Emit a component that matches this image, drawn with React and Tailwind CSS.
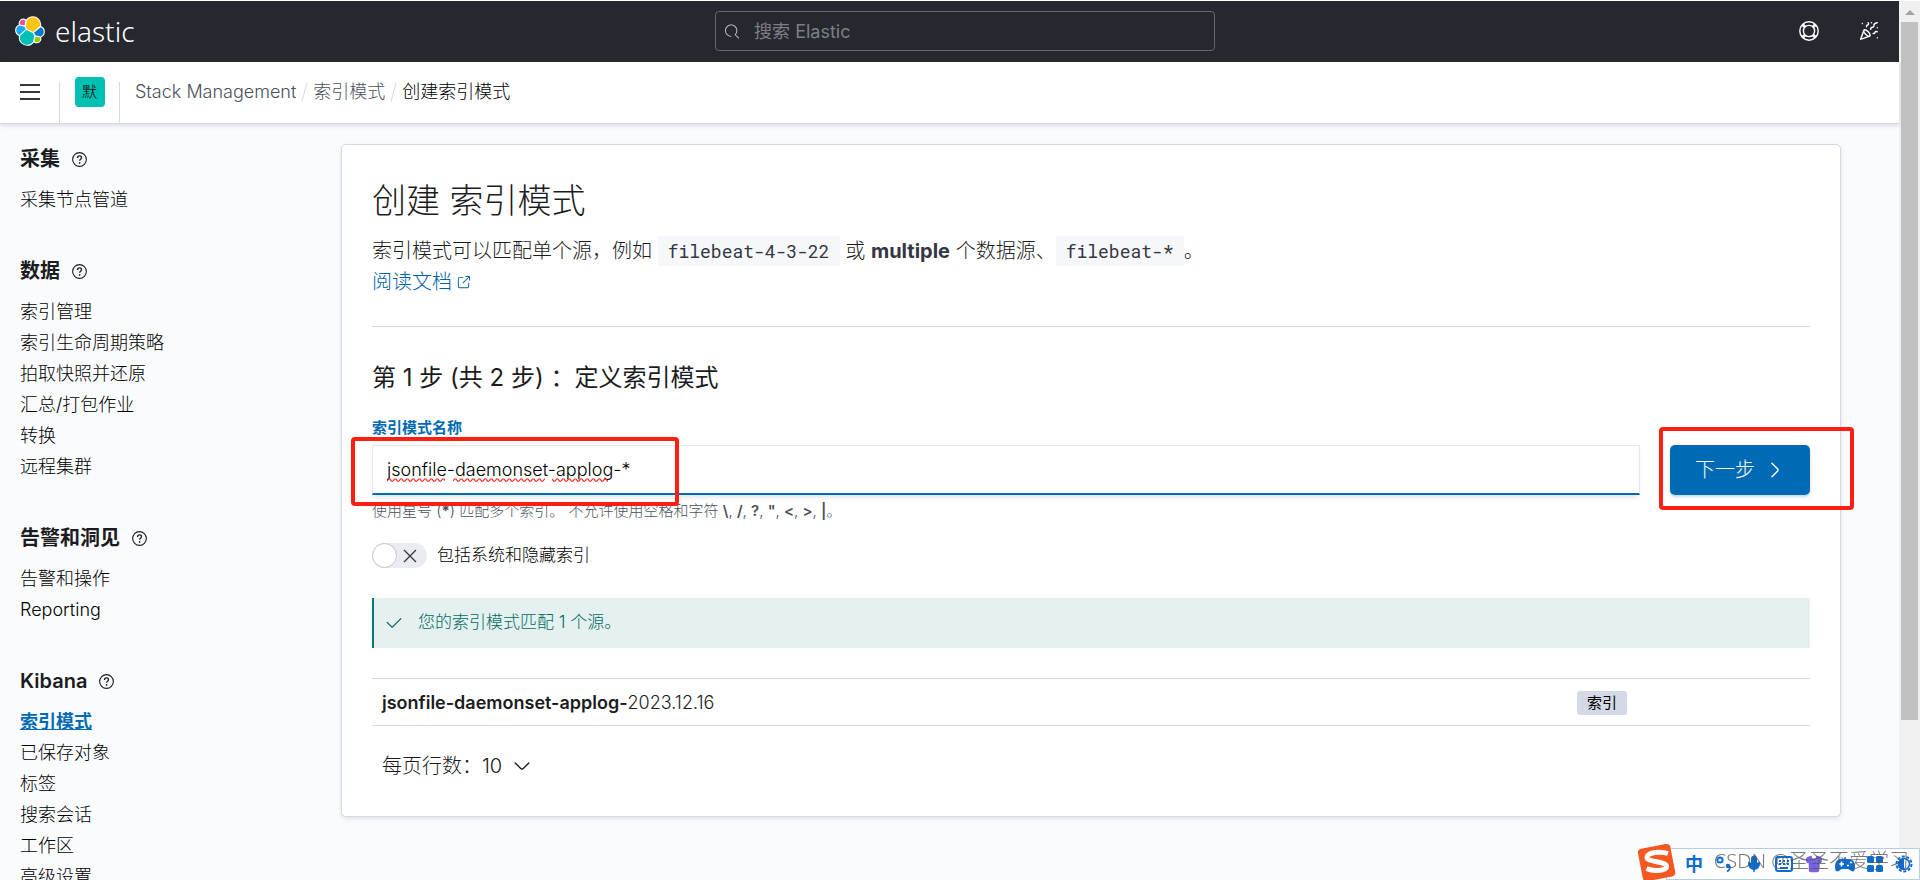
import React, { useState } from "react";
import { PartyPopper, Mic, Shirt } from "lucide-react";

const NAV_SECTIONS = [
  { title: "采集", items: ["采集节点管道"] },
  {
    title: "数据",
    items: ["索引管理", "索引生命周期策略", "拍取快照并还原", "汇总/打包作业", "转换", "远程集群"],
  },
  { title: "告警和洞见", items: ["告警和操作", "Reporting"] },
  {
    title: "Kibana",
    items: ["索引模式", "已保存对象", "标签", "搜索会话", "工作区", "高级设置"],
  },
];

const ACTIVE_ITEM = "索引模式";

const LOGO_SHAPES = [
  { fill: "#FEC514", d: "M12.58 13.787l7.002 3.211 7.066-6.213a7.849 7.849 0 00.152-1.557c0-4.287-3.464-7.762-7.738-7.762a7.72 7.72 0 00-6.382 3.379l-1.176 6.126 1.076 2.816z" },
  { fill: "#00BFB3", d: "M5.333 21.228A7.964 7.964 0 005.18 22.81c0 4.3 3.489 7.798 7.776 7.798a7.76 7.76 0 006.415-3.398l1.166-6.102-1.556-2.985-7.03-3.215-6.618 6.32z" },
  { fill: "#F04E98", d: "M5.288 9.067l4.8 1.137L11.14 4.72a3.8 3.8 0 00-2.306-.777 3.814 3.814 0 00-3.793 3.818c0 .451.08.893.246 1.306z" },
  { fill: "#1BA9F5", d: "M4.87 10.214a5.297 5.297 0 00-3.54 4.996c0 2.2 1.357 4.165 3.393 4.943l6.735-6.108-1.237-2.65-5.35-1.18z" },
  { fill: "#93C90E", d: "M20.873 27.209a3.784 3.784 0 002.288.782 3.814 3.814 0 003.793-3.818c0-.452-.08-.894-.243-1.303l-4.798-1.125-1.04 5.464z" },
  { fill: "#0077CC", d: "M21.848 20.563l5.283 1.237a5.3 5.3 0 003.541-4.996 5.288 5.288 0 00-3.403-4.936l-6.91 6.07 1.489 2.625z" },
];

const ElasticLogo = () => (
  <svg viewBox="0 0 32 32" className="size-[30px]" aria-hidden="true">
    {LOGO_SHAPES.map((s) => (
      <path key={s.fill} d={s.d} fill="#fff" stroke="#fff" strokeWidth="2.4" strokeLinejoin="round" />
    ))}
    {LOGO_SHAPES.map((s) => (
      <path key={s.fill} d={s.d} fill={s.fill} />
    ))}
  </svg>
);

const Icon = ({ d, className }) => (
  <svg viewBox="0 0 16 16" fill="currentColor" className={className} aria-hidden="true">
    <path d={d} />
  </svg>
);

const SEARCH =
  "M11.271 11.978l3.872 3.873a.502.502 0 00.708 0 .502.502 0 000-.708l-3.565-3.564c2.38-2.747 2.267-6.923-.342-9.532-2.73-2.73-7.17-2.73-9.898 0-2.728 2.729-2.728 7.17 0 9.9a6.955 6.955 0 004.949 2.05.5.5 0 000-1 5.96 5.96 0 01-4.242-1.757 6.01 6.01 0 010-8.486 6.004 6.004 0 018.484 0 6.01 6.01 0 010 8.486.5.5 0 00.034.738z";
const POPOUT =
  "M13 8.5a.5.5 0 111 0V12a2 2 0 01-2 2H4a2 2 0 01-2-2V4a2 2 0 012-2h3.5a.5.5 0 010 1H4a1 1 0 00-1 1v8a1 1 0 001 1h8a1 1 0 001-1V8.5zm-5.12.339a.5.5 0 11-.706-.707L13.305 2H10.5a.5.5 0 110-1H14a1 1 0 011 1v3.5a.5.5 0 11-1 0V2.72L7.88 8.838z";
const CHECK =
  "M6.5 12a.502.502 0 01-.354-.146l-4-4a.502.502 0 01.708-.708L6.5 10.793l6.646-6.647a.502.502 0 01.708.708l-7 7A.502.502 0 016.5 12";
const ARROW_RIGHT =
  "M5.157 13.069l4.611-4.685a.546.546 0 000-.768L5.158 2.93a.552.552 0 010-.771.53.53 0 01.759 0l4.61 4.684a1.65 1.65 0 010 2.312l-4.61 4.684a.53.53 0 01-.76 0 .552.552 0 010-.771z";
const ARROW_DOWN =
  "M13.069 5.157L8.384 9.768a.546.546 0 01-.768 0L2.93 5.158a.552.552 0 00-.771 0 .53.53 0 000 .759l4.684 4.61a1.65 1.65 0 002.312 0l4.684-4.61a.53.53 0 000-.76.552.552 0 00-.771 0z";

const QuestionIcon = () => (
  <svg viewBox="0 0 16 16" fill="none" stroke="currentColor" className="size-[15px]" aria-hidden="true">
    <circle cx="8" cy="8" r="7.3" strokeWidth="1.2" />
    <path d="M5.9 6.3c0-1.3.9-2.1 2.1-2.1s2.1.8 2.1 1.9c0 1.5-2 1.6-2 3.3" strokeWidth="1.4" />
    <circle cx="8.1" cy="11.6" r=".9" fill="currentColor" stroke="none" />
  </svg>
);

const HelpIcon = () => (
  <svg viewBox="0 0 20 20" fill="none" stroke="currentColor" className="size-5" aria-hidden="true">
    <circle cx="10" cy="10" r="9.2" strokeWidth="1.4" />
    <circle cx="10" cy="10" r="5.6" strokeWidth="1.4" />
    <path d="M3.6 3.6l2.4 2.4M16.4 3.6L14 6M3.6 16.4L6 14M16.4 16.4L14 14" strokeWidth="3" />
  </svg>
);

const Header = () => (
  <header className="mt-px flex h-[61px] shrink-0 items-center justify-between border-b border-[#2a2030] bg-[#25282f] px-[15px] text-white">
    <a href="#" className="flex flex-1 items-center gap-2.5">
      <ElasticLogo />
      <span className="font-['Noto_Sans'] text-[28px] leading-[30px] font-light">elastic</span>
    </a>
    <label className="ml-9 flex h-10 w-[500px] items-center gap-[15px] rounded-sm border border-[#65676c] px-[9px] text-[#c8c9cb]">
      <Icon d={SEARCH} className="size-[15px]" />
      <input
        type="search"
        aria-label="搜索 Elastic"
        placeholder="搜索 Elastic"
        className="h-10 w-full bg-transparent text-[18px] outline-none placeholder:text-[#7d7f84]"
      />
    </label>
    <div className="flex flex-1 items-center justify-end gap-10 pr-[5px]">
      <button type="button" aria-label="帮助"><HelpIcon /></button>
      <button type="button" aria-label="新闻"><PartyPopper className="size-5" strokeWidth={1.7} /></button>
    </div>
  </header>
);

const Breadcrumbs = () => (
  <div className="relative z-10 flex h-[62px] shrink-0 items-end border-b border-[#d3dae6] bg-white shadow-[0_2px_4px_rgba(152,162,179,0.3)]">
    <div className="flex h-[41px] w-[60px] items-start border-r border-[#d3dae6] pl-5">
      <button type="button" aria-label="菜单" className="flex h-5 w-5 flex-col justify-between py-0.5">
        <span className="h-0.5 w-full bg-[#343741]" />
        <span className="h-0.5 w-full bg-[#343741]" />
        <span className="h-0.5 w-full bg-[#343741]" />
      </button>
    </div>
    <div className="flex h-[41px] w-[60px] items-start justify-center border-r border-[#d3dae6]">
      <button type="button" className="-mt-[5px] size-[30px] rounded bg-[#00bfb3] text-[15px] font-light text-black">默</button>
    </div>
    <nav className="mb-[18px] ml-[15px] flex items-center gap-2 text-[18px] leading-[26px] font-light text-[#4a505c]">
      <a href="#">Stack Management</a>
      <span className="h-5 w-px rotate-[15deg] bg-[#d3dae6]" />
      <a href="#">索引模式</a>
      <span className="h-5 w-px rotate-[15deg] bg-[#d3dae6]" />
      <span className="text-black">创建索引模式</span>
    </nav>
  </div>
);

const SideNav = () => (
  <aside className="w-[341px] shrink-0 pt-5 pl-5 text-[#1a1c21]">
    {NAV_SECTIONS.map((section) => (
      <div key={section.title} className="mb-[41px]">
        <h2 className="mb-2.5 flex items-center gap-3 text-[20px] leading-[30px] font-semibold">
          {section.title}
          <QuestionIcon />
        </h2>
        <ul>
          {section.items.map((item) => (
            <li key={item} className="text-[18px] leading-[31px] font-light text-black">
              <a href="#" className={item === ACTIVE_ITEM ? "font-bold text-[#006bb4] underline" : ""}>
                {item}
              </a>
            </li>
          ))}
        </ul>
      </div>
    ))}
  </aside>
);

// Red wavy marks under the words the browser does not know
const SpellMarks = () => (
  <svg className="pointer-events-none absolute top-[33px] left-[15px] h-1 w-[230px]" aria-hidden="true">
    <defs>
      <pattern id="wave" width="6" height="4" patternUnits="userSpaceOnUse">
        <path d="M0 3.2L1.5 1L3 1L4.5 3.2L6 3.2" fill="none" stroke="#f02a2a" strokeWidth="1.2" />
      </pattern>
    </defs>
    <rect x="0" width="58" height="4" fill="url(#wave)" />
    <rect x="66" width="92" height="4" fill="url(#wave)" />
    <rect x="165" width="56" height="4" fill="url(#wave)" />
  </svg>
);

const StepForm = () => {
  const [pattern, setPattern] = useState("jsonfile-daemonset-applog-*");
  const [hidden, setHidden] = useState(false);

  return (
    <form onSubmit={(e) => e.preventDefault()}>
      <label htmlFor="pattern" className="block text-[15px] leading-[22px] font-semibold text-[#006bb4]">
        索引模式名称
      </label>
      <div className="mt-1.5 flex items-start gap-[30px]">
        <div className="relative flex-1">
          <input
            id="pattern"
            type="text"
            spellCheck="false"
            value={pattern}
            onChange={(e) => setPattern(e.target.value)}
            className="block h-[50px] w-full border border-b-2 border-[#e6e8ef] border-b-[#006bb4] bg-white px-3.5 text-[18px] font-light text-black shadow-[0_4px_5px_-2px_rgba(152,162,179,0.35)] outline-none"
          />
          <SpellMarks />
          <span className="pointer-events-none absolute -top-2 -bottom-[11px] -left-[21px] w-[328px] rounded border-4 border-[#ff1e12]" />
        </div>
        <div className="relative">
          <button
            type="submit"
            className="flex h-[50px] w-[140px] items-center gap-2.5 rounded-[5px] bg-[#006bb4] pl-[25px] text-[20px] font-light text-white shadow-[0_2px_3px_rgba(0,107,180,0.25)]"
          >
            下一步
            <Icon d={ARROW_RIGHT} className="size-5" />
          </button>
          <span className="pointer-events-none absolute -top-[18px] -right-11 -bottom-[15px] -left-[11px] rounded border-4 border-[#ff1e12]" />
        </div>
      </div>
      <p className="mt-[5px] text-[15px] leading-[22px] font-light text-[#4a505c]">
        使用星号 (<b className="font-bold">*</b>) 匹配多个索引。 不允许使用空格和字符 <b className="font-semibold">\</b>, <b className="font-semibold">/</b>, <b className="font-semibold">?</b>, <b className="font-semibold">"</b>, <b className="font-semibold">&lt;</b>, <b className="font-semibold">&gt;</b>, <b className="font-semibold">|</b>。
      </p>
      <div className="mt-[21px] flex items-center gap-2.5">
        <button
          type="button"
          id="hidden-switch"
          role="switch"
          aria-checked={hidden}
          onClick={() => setHidden(!hidden)}
          className="flex h-[25px] w-[55px] items-center gap-1.5 rounded-full bg-[#ebecf1]"
        >
          <span className="size-[25px] rounded-full border border-[#c3c5ca] bg-white" />
          <svg viewBox="0 0 14 14" stroke="currentColor" strokeWidth="1.3" className="size-3.5 text-[#343741]" aria-hidden="true">
            <path d="M1 1l12 12M13 1L1 13" />
          </svg>
        </button>
        <label htmlFor="hidden-switch" className="text-[17px] leading-[25px] font-light text-black">包括系统和隐藏索引</label>
      </div>
    </form>
  );
};

const Panel = () => (
  <main className="min-w-0 flex-1 rounded-[5px] border border-[#d3dae6] bg-white px-[30px] pt-[31px] pb-[30px] text-[#1a1c21] shadow-[0_2px_4px_rgba(152,162,179,0.25)]">
    <h1 className="text-[34px] leading-[50px] font-light">创建 索引模式</h1>
    <div className="mt-2.5 text-[20px] leading-[31px] font-light">
      <p>
        索引模式可以匹配单个源，例如{" "}
        <code className="inline-block bg-[#f5f7fa] px-2.5 font-['Roboto_Mono','DejaVu_Sans_Mono',monospace] text-[18px] leading-[30px] font-normal text-[#343741]">filebeat-4-3-22</code>{" "}
        或 <b className="font-bold text-[#343741]">multiple</b> 个数据源、
        <code className="inline-block bg-[#f5f7fa] px-2.5 font-['Roboto_Mono','DejaVu_Sans_Mono',monospace] text-[18px] leading-[30px] font-normal text-[#343741]">filebeat-*</code>
        。
      </p>
      <a href="#" className="inline-flex items-center gap-1 text-[#005fa8]">
        阅读文档
        <Icon d={POPOUT} className="size-[15px]" />
      </a>
    </div>
    <hr className="mt-7 mb-[31px] border-[#d3dae6]" />
    <h2 className="mb-[19px] text-[24px] leading-10 font-normal">第 1 步 (共 2 步) ：定义索引模式</h2>
    <StepForm />
    <div className="mt-[30px] flex h-[50px] items-center gap-3.5 border-l-2 border-[#017d73] bg-[#e5f1f0] pl-2.5 text-[17px] font-light text-[#006b62]">
      <Icon d={CHECK} className="size-5" />
      您的索引模式匹配 1 个源。
    </div>
    <table className="mt-[30px] w-full table-fixed border-y border-[#d3dae6] text-left">
      <tbody>
        <tr className="h-[47px]">
          <td className="px-2.5 text-[18px] font-light"><b className="font-semibold">jsonfile-daemonset-applog-</b>2023.12.16</td>
          <td className="w-[243px] px-2.5">
            <span className="inline-block rounded-[3px] bg-[#d3dae6] px-2.5 text-[15px] leading-6 text-black">索引</span>
          </td>
        </tr>
      </tbody>
    </table>
    <button type="button" className="mt-5 ml-2.5 flex h-10 items-center gap-2.5 text-[20px] font-light">
      每页行数：10
      <Icon d={ARROW_DOWN} className="size-5" />
    </button>
  </main>
);

const ScrollBar = () => (
  <div className="mt-px flex w-[21px] shrink-0 flex-col items-center bg-[#f0f0f0]">
    <svg viewBox="0 0 10 5" className="mt-[9px] mb-[7px] h-[5px] w-2.5 shrink-0" fill="#a3a3a3" aria-hidden="true">
      <path d="M0 5L5 0l5 5z" />
    </svg>
    <div className="h-[698px] w-[17px] shrink-0 bg-[#c1c1c1]" />
  </div>
);

const ImeBar = () => (
  <div className="fixed right-0 bottom-0 flex h-8 items-center border border-[#b4cdea] bg-white pr-1.5 pl-[18px] text-[#0c6cd2]">
    <svg viewBox="0 0 40 38" className="absolute -top-1.5 -left-[30px] h-[38px] w-10" aria-hidden="true">
      <rect x="3" y="3" width="33" height="33" rx="4" transform="rotate(-11 20 19)" fill="#f4571f" />
      <path d="M31 10.5C24 8 11 9 10 14c-1 5.5 20 4 19.5 9.5 0 5-14 5-20 2" fill="none" stroke="#fff" strokeWidth="5" />
    </svg>
    <div className="flex items-center gap-3">
      <span className="text-[18px] font-bold">中</span>
      <svg viewBox="0 0 18 18" className="size-[18px]" aria-hidden="true">
        <circle cx="5" cy="5" r="2.6" fill="none" stroke="currentColor" strokeWidth="2" />
        <circle cx="13" cy="11" r="2.2" fill="currentColor" />
        <path d="M15 11c.3 3-1 4.500-3 5.500" fill="none" stroke="currentColor" strokeWidth="1.6" />
      </svg>
      <Mic className="size-[18px]" fill="currentColor" />
      <svg viewBox="0 0 18 16" className="h-4 w-[18px]" fill="none" stroke="currentColor" strokeWidth="2" aria-hidden="true">
        <rect x="1" y="1" width="16" height="14" rx="2" />
        <path d="M4 5h2M8 5h2M12 5h2M4 8h2M8 8h2M12 8h2M5 12h8" />
      </svg>
      <Shirt className="size-[18px] text-[#7a62e8]" fill="currentColor" />
      <svg viewBox="0 0 20 16" className="h-4 w-5" aria-hidden="true">
        <path d="M10 4V1" stroke="currentColor" strokeWidth="1.6" />
        <path d="M5 3h10c3 0 5 4 5 8 0 3-1 4.500-2.500 4.500S14.500 13 13 13H7c-1.500 0-3 2.500-4.500 2.500S0 14 0 11c0-4 2-8 5-8z" fill="currentColor" />
        <path d="M4 8h5M6.500 5.500v5M12 9.500h2M15 6.500h2" stroke="#fff" strokeWidth="1.5" />
      </svg>
      <svg viewBox="0 0 16 16" className="size-4" fill="currentColor" aria-hidden="true">
        <rect width="7" height="7" rx="1.5" />
        <rect x="9" width="7" height="7" rx="1.5" />
        <rect y="9" width="7" height="7" rx="1.5" />
        <rect x="9" y="9" width="7" height="7" rx="1.5" />
      </svg>
      <svg viewBox="0 0 18 18" className="size-[18px]" aria-hidden="true">
        <circle cx="9" cy="9" r="7.5" fill="none" stroke="currentColor" strokeWidth="2" strokeDasharray="3 1.7" />
        <path d="M9 3a6 6 0 000 12z" fill="currentColor" />
        <circle cx="9" cy="9" r="5.5" fill="none" stroke="currentColor" strokeWidth="1.5" />
      </svg>
    </div>
    <span className="absolute right-2.5 bottom-0.5 font-['Noto_Sans','Noto_Sans_CJK_SC',sans-serif] text-[20px] leading-8 font-light whitespace-nowrap text-[#55575c]/80">
      CSDN @圣圣不爱学习
    </span>
  </div>
);

const App = () => {
  return (
    <div className="flex h-screen overflow-hidden bg-white font-['Inter','Noto_Sans_CJK_SC',sans-serif]">
      <div className="flex min-w-0 flex-1 flex-col">
        <Header />
        <Breadcrumbs />
        <div className="flex min-h-0 flex-1 items-start bg-[#fafbfd] pr-[58px]">
          <SideNav />
          <div className="flex min-w-0 flex-1 pt-5">
            <Panel />
          </div>
        </div>
      </div>
      <ScrollBar />
      <ImeBar />
    </div>
  );
};

export default App;
